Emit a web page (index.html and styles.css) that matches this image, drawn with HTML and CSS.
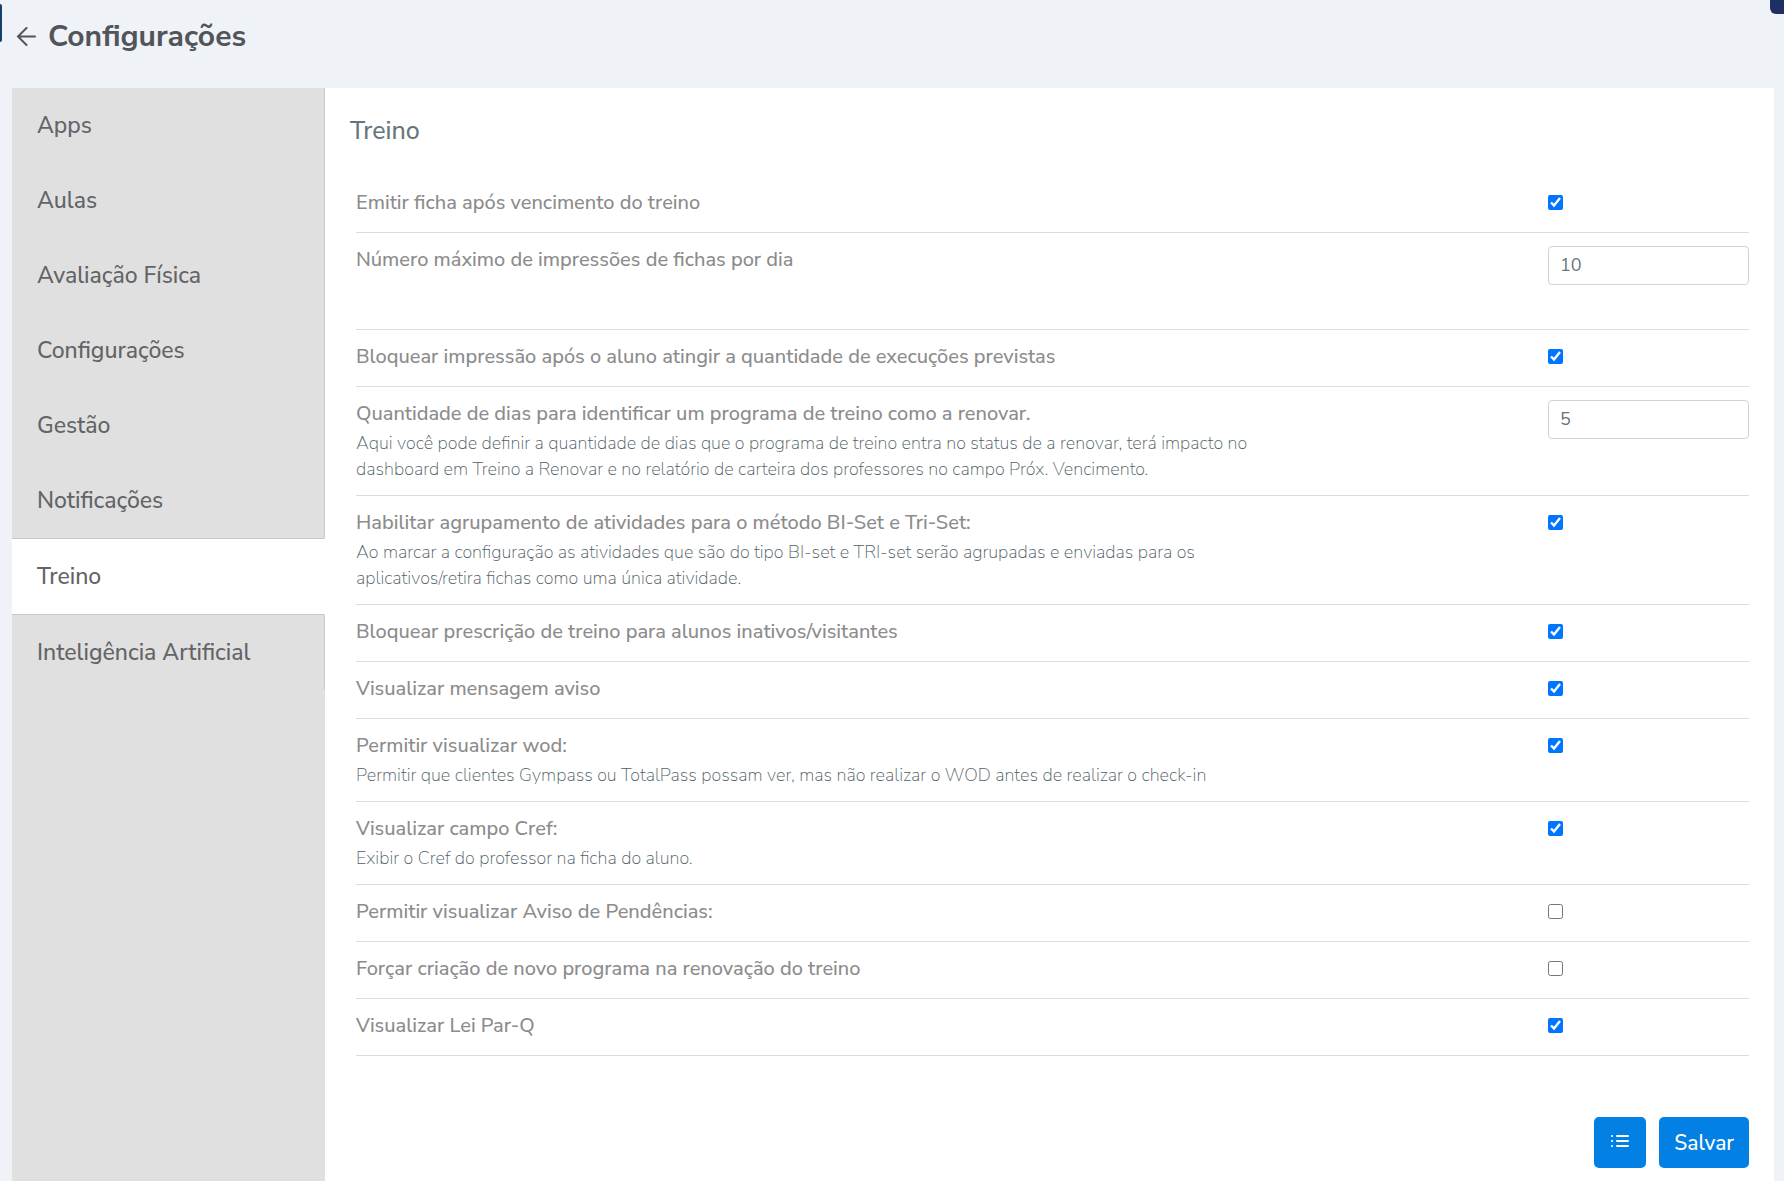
FILE: index.html
```html
<!DOCTYPE html>
<html lang="pt-br">
<head>
  <meta charset="UTF-8">
  <meta name="viewport" content="width=device-width, initial-scale=1.0">
  <title>Configurações</title>
  <link rel="stylesheet" href="styles.css">
</head>
<body>

  <!-- Abas laterais recolhidas -->
  <span class="edge-tab"></span>
  <span class="corner-tab"></span>

  <header class="page-header">
    <a href="#" class="back-link" aria-label="Voltar">
      <svg width="20" height="20" viewBox="0 0 20 20" fill="none" stroke="currentColor" stroke-width="2" stroke-linecap="round">
        <path d="M19 9.500H2M10.500 1L2 9.500l8.500 8.500"/>
      </svg>
    </a>
    <h1 class="page-title">Configurações</h1>
  </header>

  <div class="container">
    <!-- Menu lateral -->
    <nav class="sidebar">
      <a href="#" class="menu-item">Apps</a>
      <a href="#" class="menu-item">Aulas</a>
      <a href="#" class="menu-item">Avaliação Física</a>
      <a href="#" class="menu-item">Configurações</a>
      <a href="#" class="menu-item">Gestão</a>
      <a href="#" class="menu-item">Notificações</a>
      <a href="#" class="menu-item active">Treino</a>
      <a href="#" class="menu-item">Inteligência Artificial</a>
    </nav>

    <!-- Configurações de treino -->
    <main class="content">
      <h2 class="content-title">Treino</h2>

      <form id="config-treino">
        <div class="settings">
          <div class="row">
            <div class="info">
              <label for="emitir-ficha">Emitir ficha após vencimento do treino</label>
            </div>
            <input type="checkbox" id="emitir-ficha" checked>
          </div>

          <div class="row">
            <div class="info">
              <label for="max-impressoes">Número máximo de impressões de fichas por dia</label>
            </div>
            <input type="text" id="max-impressoes" value="10">
          </div>

          <div class="row">
            <div class="info">
              <label for="bloquear-impressao">Bloquear impressão após o aluno atingir a quantidade de execuções previstas</label>
            </div>
            <input type="checkbox" id="bloquear-impressao" checked>
          </div>

          <div class="row">
            <div class="info">
              <label for="dias-renovar">Quantidade de dias para identificar um programa de treino como a renovar.</label>
              <p class="description">Aqui você pode definir a quantidade de dias que o programa de treino entra no status de a renovar, terá impacto no dashboard em Treino a Renovar e no relatório de carteira dos professores no campo Próx. Vencimento.</p>
            </div>
            <input type="text" id="dias-renovar" value="5">
          </div>

          <div class="row">
            <div class="info">
              <label for="agrupamento">Habilitar agrupamento de atividades para o método BI-Set e Tri-Set:</label>
              <p class="description">Ao marcar a configuração as atividades que são do tipo BI-set e TRI-set serão agrupadas e enviadas para os aplicativos/retira fichas como uma única atividade.</p>
            </div>
            <input type="checkbox" id="agrupamento" checked>
          </div>

          <div class="row">
            <div class="info">
              <label for="bloquear-prescricao">Bloquear prescrição de treino para alunos inativos/visitantes</label>
            </div>
            <input type="checkbox" id="bloquear-prescricao" checked>
          </div>

          <div class="row">
            <div class="info">
              <label for="mensagem-aviso">Visualizar mensagem aviso</label>
            </div>
            <input type="checkbox" id="mensagem-aviso" checked>
          </div>

          <div class="row">
            <div class="info">
              <label for="visualizar-wod">Permitir visualizar wod:</label>
              <p class="description">Permitir que clientes Gympass ou TotalPass possam ver, mas não realizar o WOD antes de realizar o check-in</p>
            </div>
            <input type="checkbox" id="visualizar-wod" checked>
          </div>

          <div class="row">
            <div class="info">
              <label for="campo-cref">Visualizar campo Cref:</label>
              <p class="description">Exibir o Cref do professor na ficha do aluno.</p>
            </div>
            <input type="checkbox" id="campo-cref" checked>
          </div>

          <div class="row">
            <div class="info">
              <label for="aviso-pendencias">Permitir visualizar Aviso de Pendências:</label>
            </div>
            <input type="checkbox" id="aviso-pendencias">
          </div>

          <div class="row">
            <div class="info">
              <label for="forcar-criacao">Forçar criação de novo programa na renovação do treino</label>
            </div>
            <input type="checkbox" id="forcar-criacao">
          </div>

          <div class="row">
            <div class="info">
              <label for="lei-parq">Visualizar Lei Par-Q</label>
            </div>
            <input type="checkbox" id="lei-parq" checked>
          </div>
        </div>

        <div class="actions">
          <button type="button" class="log-button" aria-label="Histórico">
            <svg width="18" height="14" viewBox="0 0 18 14" fill="none" stroke="currentColor" stroke-width="2" stroke-linecap="round">
              <path d="M6 2h11M6 7h11M6 12h11M1 2h.1M1 7h.1M1 12h.1"/>
            </svg>
          </button>
          <button type="submit" class="save-button">Salvar</button>
        </div>
      </form>
    </main>
  </div>

</body>
</html>
```
FILE: styles.css
```css
* {
  margin: 0;
  padding: 0;
  box-sizing: border-box;
}

body {
  font-family: "Nunito Sans", Nunito, Lato, sans-serif;
  min-height: 100vh;
  display: flex;
  flex-direction: column;
  background-color: #eff2f7;
  color: #51555a;
}

.edge-tab {
  position: absolute;
  top: 4px;
  left: 0;
  width: 2px;
  height: 38px;
  background-color: #163e6b;
  border-radius: 0 2px 2px 0;
}

.corner-tab {
  position: absolute;
  top: 0;
  right: 0;
  width: 14px;
  height: 14px;
  background-color: #1e2f61;
  border-bottom-left-radius: 6px;
}

.page-header {
  display: flex;
  align-items: center;
  gap: 12px;
  padding: 17px 16px 31px;
}

.back-link {
  display: flex;
  color: #51555a;
}

.page-title {
  font-size: 30px;
  line-height: 40px;
  font-weight: bold;
}

.container {
  display: flex;
  flex: 1;
  margin: 0 10px 0 12px;
  background-color: #fff;
}

.sidebar {
  width: 313px;
  flex-shrink: 0;
  background-color: #e0e0e0;
}

.menu-item {
  display: block;
  padding: 23px 24px 22px 25px;
  border-right: 1px solid #c9c9c9;
  font-size: 23px;
  line-height: 30px;
  font-weight: 500;
  color: #626466;
  text-decoration: none;
}

.menu-item.active {
  background-color: #fff;
  border-top: 1px solid #c9c9c9;
  border-bottom: 1px solid #c9c9c9;
  border-right-color: #fff;
}

.content {
  flex: 1;
  padding: 25px 25px 13px;
}

.content-title {
  margin-bottom: 27px;
  font-size: 25px;
  line-height: 36px;
  font-weight: 500;
  color: #67757c;
}

.settings {
  margin-left: 6px;
}

.row {
  display: grid;
  grid-template-columns: 1fr 201px;
  align-items: start;
  min-height: 57px;
  padding: 13px 0;
  border-bottom: 1px solid #dcdcdc;
}

.info label {
  display: block;
  font-size: 20px;
  line-height: 28px;
  font-weight: 500;
  color: #8c8c8c;
}

.description {
  max-width: 77%;
  margin-top: 2px;
  font-size: 18px;
  line-height: 26px;
  font-weight: 200;
  color: #4f5e66;
}

input[type="checkbox"] {
  width: 15px;
  height: 15px;
  margin-top: 6px;
  accent-color: #0075ff;
}

input[type="text"] {
  width: 100%;
  height: 39px;
  margin-bottom: 31px;
  padding: 0 11px 1px;
  border: 1px solid #ced4da;
  border-radius: 4px;
  font-family: inherit;
  font-size: 18px;
  color: #67757c;
}

.actions {
  display: flex;
  justify-content: flex-end;
  gap: 13px;
  margin-top: 61px;
}

button {
  height: 51px;
  background-color: #0380e3;
  color: white;
  border: none;
  border-radius: 5px;
  font-family: inherit;
  font-size: 21px;
  font-weight: 500;
  cursor: pointer;
}

button:hover {
  background-color: #0270c8;
}

.log-button {
  padding: 0 17px 4px;
}

.save-button {
  padding: 0 15px;
}
```
